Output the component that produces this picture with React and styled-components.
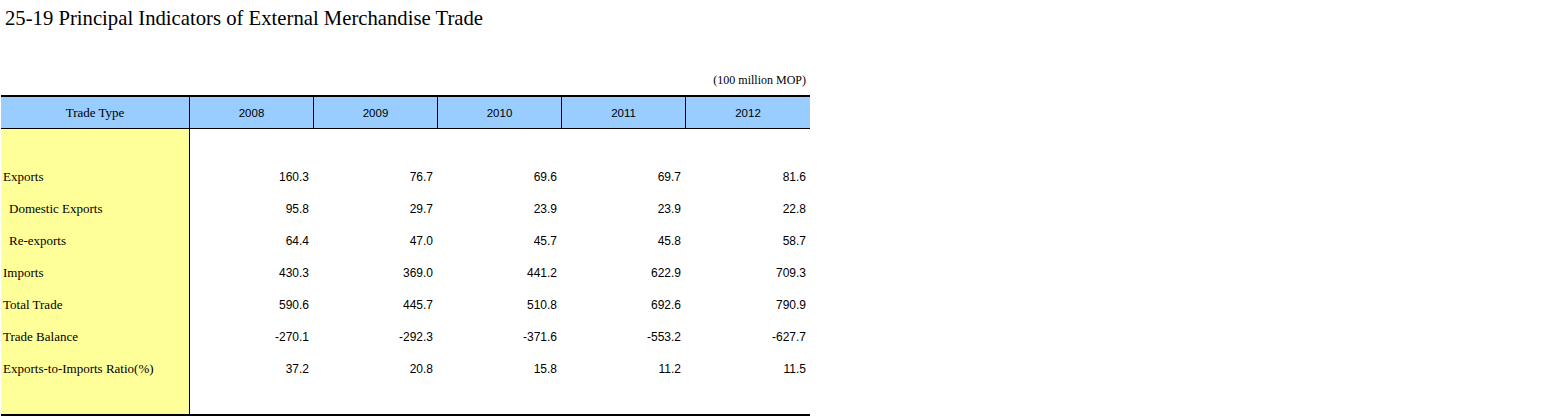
import React from "react";
import styled, { createGlobalStyle } from "styled-components";

const Global = createGlobalStyle`
  html, body { margin: 0; padding: 0; background: #fff; }
  body { font-family: "Liberation Serif", "Times New Roman", serif; color: #000; }
`;

const Page = styled.div`
  width: 1554px;
  padding: 6px 0 0 1px;
  box-sizing: border-box;
`;

const Title = styled.h1`
  margin: 0 0 0 4px;
  font-family: "Liberation Serif", "Times New Roman", serif;
  font-weight: normal;
  font-size: 20.7px;
  line-height: 24px;
`;

const Unit = styled.div`
  width: 809px;
  margin-top: 42px;
  box-sizing: border-box;
  padding-right: 4px;
  text-align: right;
  font-size: 12px;
  line-height: 16px;
  height: 16px;
`;

const Table = styled.table`
  margin-top: 7px;
  width: 809px;
  border-collapse: separate;
  border-spacing: 0;
  table-layout: fixed;
  border-top: 2px solid #000;
  border-bottom: 2px solid #000;
`;

const HeadCell = styled.th`
  background: #99ccff;
  height: 32px;
  padding: 1px 0 0;
  font-weight: normal;
  text-align: center;
  vertical-align: middle;
  border-bottom: 1px solid #000;
  border-left: ${(p) => (p.$first ? "none" : "1px solid #000")};
  font-family: ${(p) =>
    p.$first
      ? '"Liberation Serif", "Times New Roman", serif'
      : '"Liberation Sans", Arial, sans-serif'};
  font-size: ${(p) => (p.$first ? "13px" : "11.5px")};
  box-sizing: border-box;
`;

const LabelCell = styled.td`
  background: #ffff99;
  padding: 0 0 0 ${(p) => (p.$indent ? "8px" : "2px")};
  height: ${(p) => p.$h}px;
  font-family: "Liberation Serif", "Times New Roman", serif;
  font-size: 13px;
  white-space: nowrap;
  vertical-align: middle;
  box-sizing: border-box;
`;

const NumCell = styled.td`
  padding: 0 4px 0 0;
  text-align: right;
  vertical-align: middle;
  font-family: "Liberation Sans", Arial, sans-serif;
  font-size: 12px;
  border-left: ${(p) => (p.$first ? "1px solid #000" : "none")};
  box-sizing: border-box;
`;

const years = ["2008", "2009", "2010", "2011", "2012"];

const rows = [
  { label: "Exports", values: ["160.3", "76.7", "69.6", "69.7", "81.6"] },
  { label: "Domestic Exports", indent: true, values: ["95.8", "29.7", "23.9", "23.9", "22.8"] },
  { label: "Re-exports", indent: true, values: ["64.4", "47.0", "45.7", "45.8", "58.7"] },
  { label: "Imports", values: ["430.3", "369.0", "441.2", "622.9", "709.3"] },
  { label: "Total Trade", values: ["590.6", "445.7", "510.8", "692.6", "790.9"] },
  { label: "Trade Balance", values: ["-270.1", "-292.3", "-371.6", "-553.2", "-627.7"] },
  { label: "Exports-to-Imports Ratio(%)", values: ["37.2", "20.8", "15.8", "11.2", "11.5"] },
];

export default function App() {
  return (
    <>
      <Global />
      <Page>
        <Title>25-19 Principal Indicators of External Merchandise Trade</Title>
        <Unit>(100 million MOP)</Unit>
        <Table>
          <colgroup>
            <col style={{ width: 188 }} />
            <col style={{ width: 124 }} />
            <col style={{ width: 124 }} />
            <col style={{ width: 124 }} />
            <col style={{ width: 124 }} />
            <col style={{ width: 125 }} />
          </colgroup>
          <thead>
            <tr>
              <HeadCell $first>Trade Type</HeadCell>
              {years.map((y) => (
                <HeadCell key={y}>{y}</HeadCell>
              ))}
            </tr>
          </thead>
          <tbody>
            <tr>
              <LabelCell $h={32} />
              {years.map((y, i) => (
                <NumCell key={y} $first={i === 0} />
              ))}
            </tr>
            {rows.map((r) => (
              <tr key={r.label}>
                <LabelCell $h={32} $indent={r.indent}>{r.label}</LabelCell>
                {r.values.map((v, i) => (
                  <NumCell key={i} $first={i === 0}>{v}</NumCell>
                ))}
              </tr>
            ))}
            <tr>
              <LabelCell $h={29} />
              {years.map((y, i) => (
                <NumCell key={y} $first={i === 0} />
              ))}
            </tr>
          </tbody>
        </Table>
      </Page>
    </>
  );
}
